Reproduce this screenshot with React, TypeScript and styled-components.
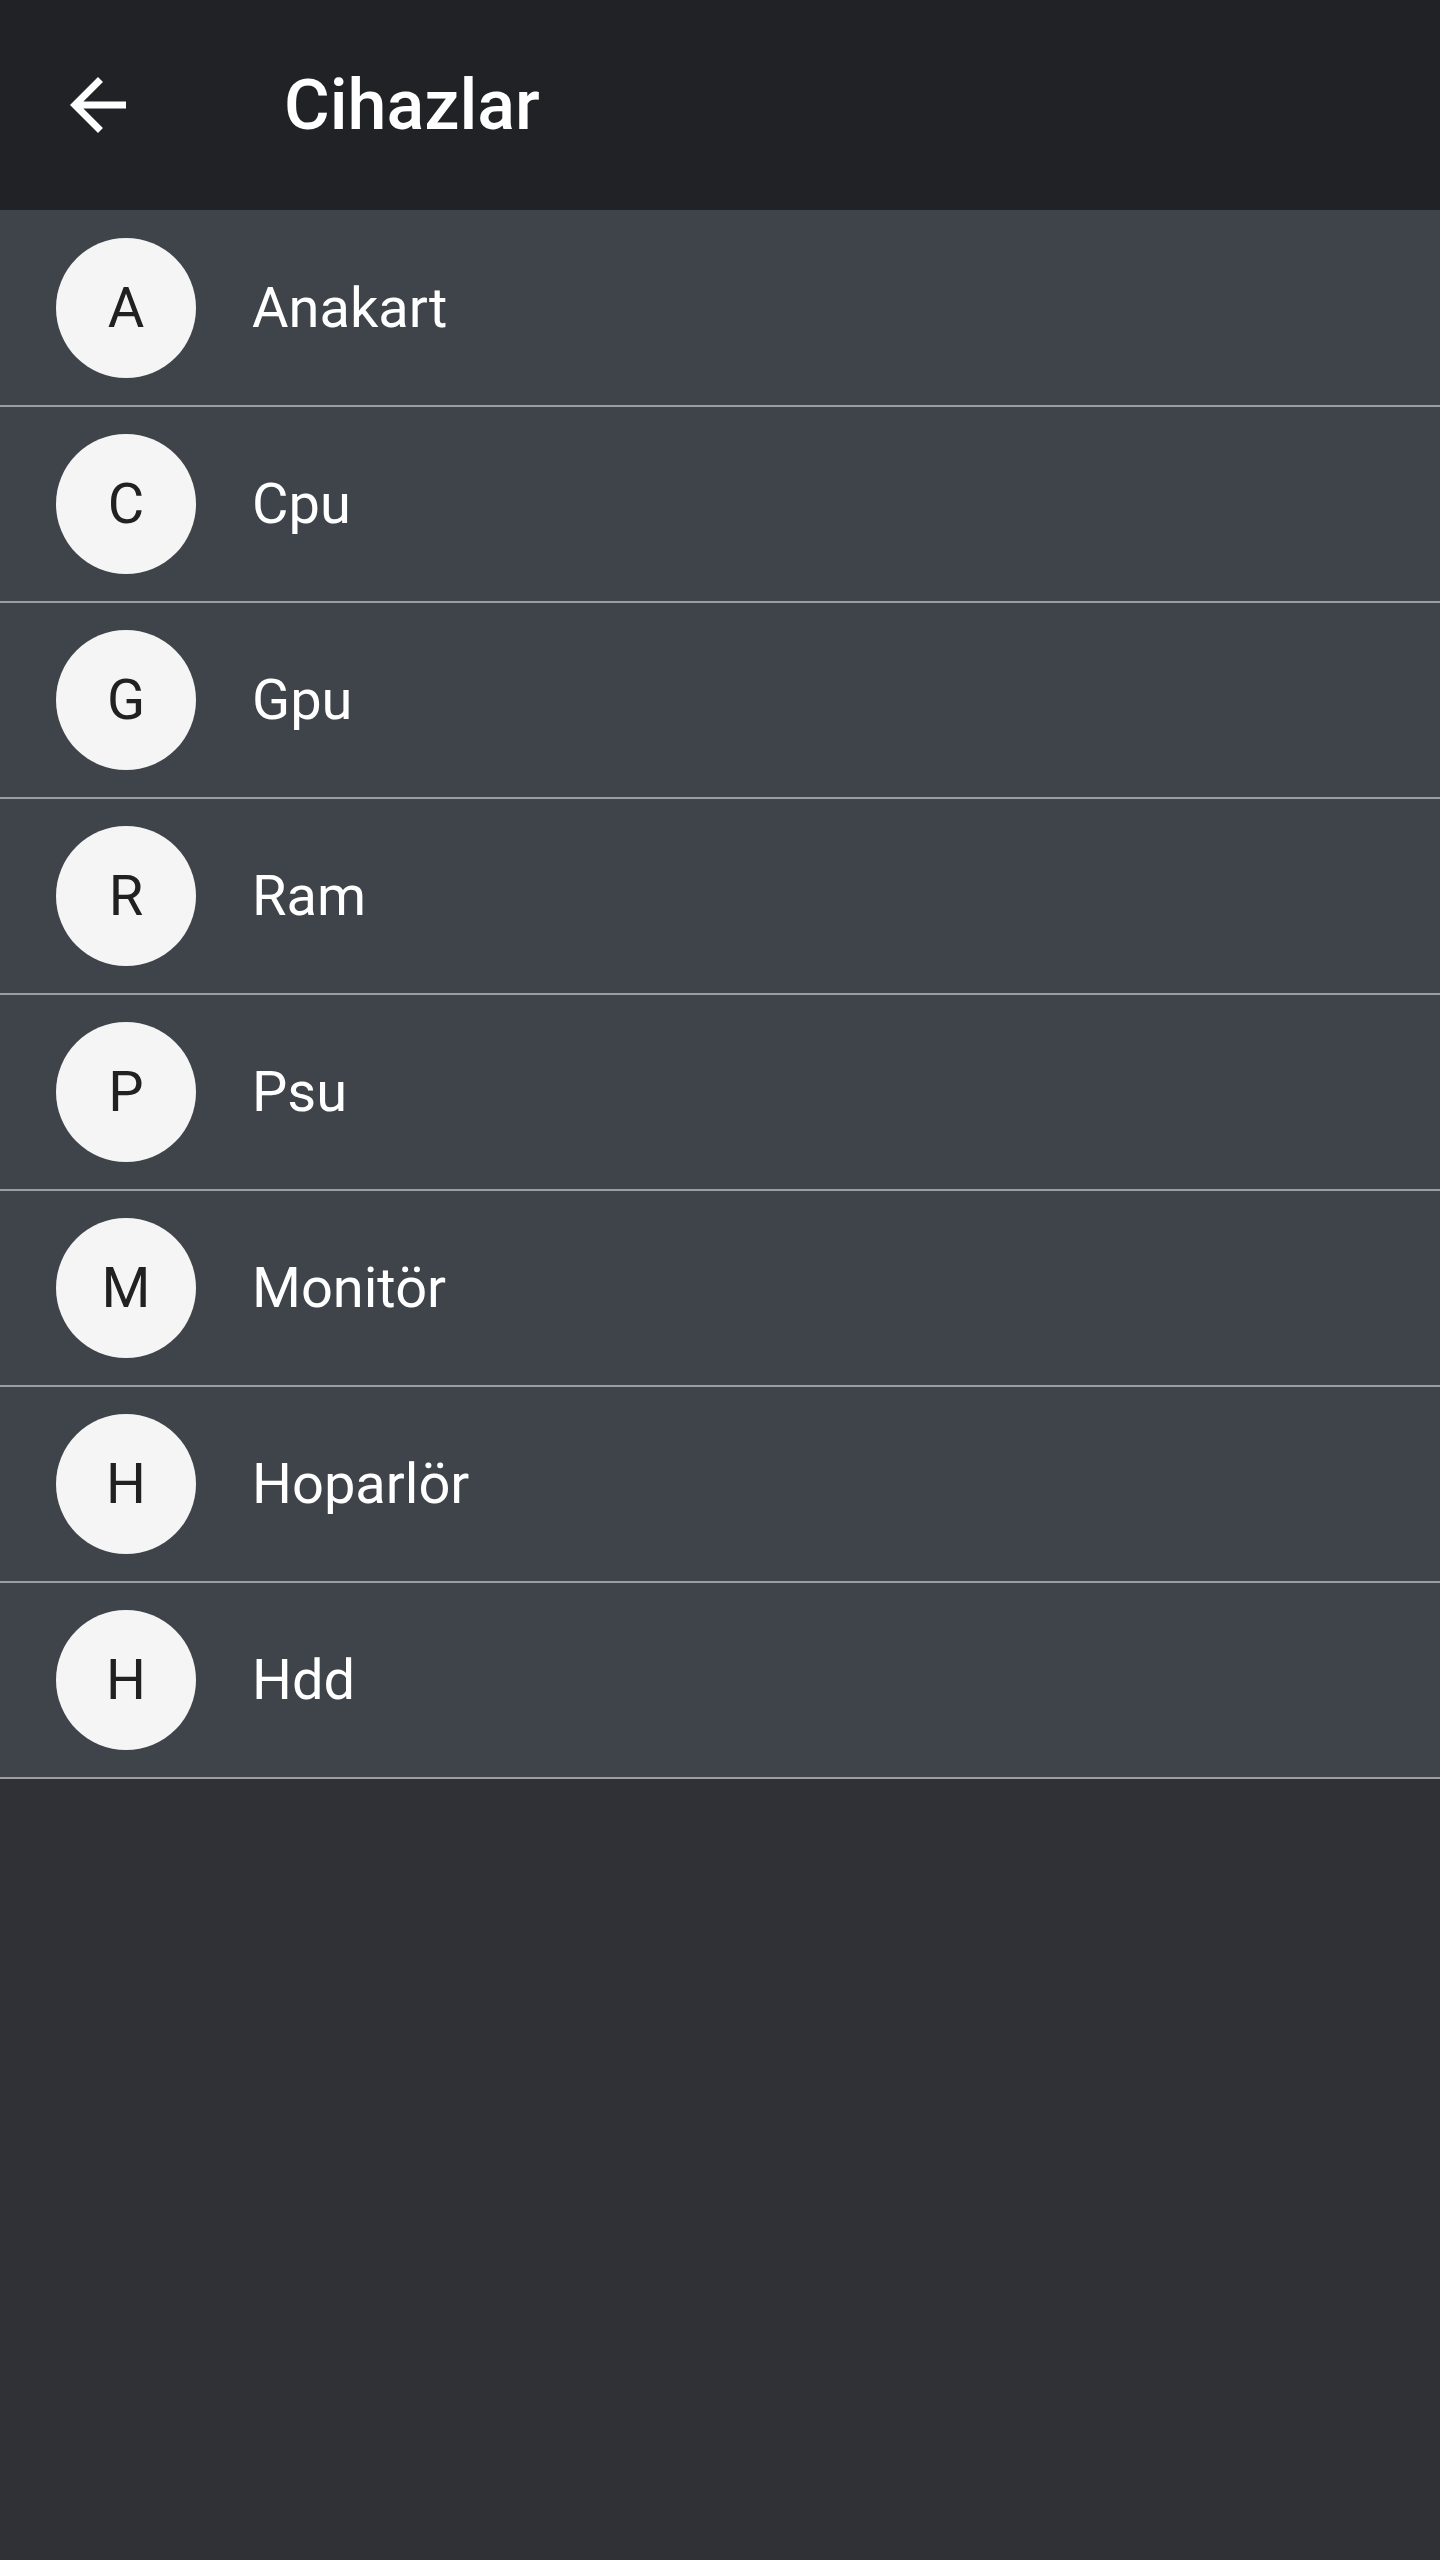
import React from "react";
import styled, { createGlobalStyle } from "styled-components";

const GlobalStyle = createGlobalStyle`
  *, *::before, *::after { box-sizing: border-box; }
  body {
    margin: 0;
    background: #303136;
    color: #ffffff;
    font-family: Roboto, "Noto Sans", sans-serif;
  }
`;

const Screen = styled.div`
  min-height: 100vh;
`;

const TopBar = styled.header`
  display: flex;
  align-items: center;
  gap: 144px;
  height: 210px;
  padding: 0 56px;
  background: #212226;
`;

const BackButton = styled.button`
  display: flex;
  width: 84px;
  height: 84px;
  padding: 0;
  border: 0;
  background: none;
  color: inherit;
  cursor: pointer;
`;

const Title = styled.h1`
  margin: 0;
  font-size: 70px;
  line-height: 84px;
  font-weight: 500;
`;

const DeviceList = styled.ul`
  margin: 0;
  padding: 1px 0 0;
  background: #3f444b;
  list-style: none;
`;

const DeviceRow = styled.li`
  border-bottom: 2px solid #9c9ea1;
`;

const DeviceLink = styled.a`
  display: flex;
  align-items: center;
  gap: 56px;
  padding: 27px 56px;
  color: inherit;
  font-size: 56px;
  line-height: 66px;
  text-decoration: none;
`;

const Avatar = styled.span`
  display: flex;
  flex: none;
  align-items: center;
  justify-content: center;
  width: 140px;
  height: 140px;
  border-radius: 50%;
  background: #f5f5f5;
  color: #212121;
`;

const devices = ["Anakart", "Cpu", "Gpu", "Ram", "Psu", "Monitör", "Hoparlör", "Hdd"];

export default function App() {
  return (
    <Screen>
      <GlobalStyle />
      <TopBar>
        <BackButton type="button" aria-label="Geri">
          <svg viewBox="0 0 24 24" width="84" height="84" fill="currentColor" aria-hidden="true">
            <path d="M20 11H7.83l5.59-5.59L12 4l-8 8 8 8 1.41-1.41L7.83 13H20v-2z" />
          </svg>
        </BackButton>
        <Title>Cihazlar</Title>
      </TopBar>
      <main>
        <DeviceList>
          {devices.map((name) => (
            <DeviceRow key={name}>
              <DeviceLink href="#">
                <Avatar aria-hidden="true">{name[0]}</Avatar>
                <span>{name}</span>
              </DeviceLink>
            </DeviceRow>
          ))}
        </DeviceList>
      </main>
    </Screen>
  );
}
